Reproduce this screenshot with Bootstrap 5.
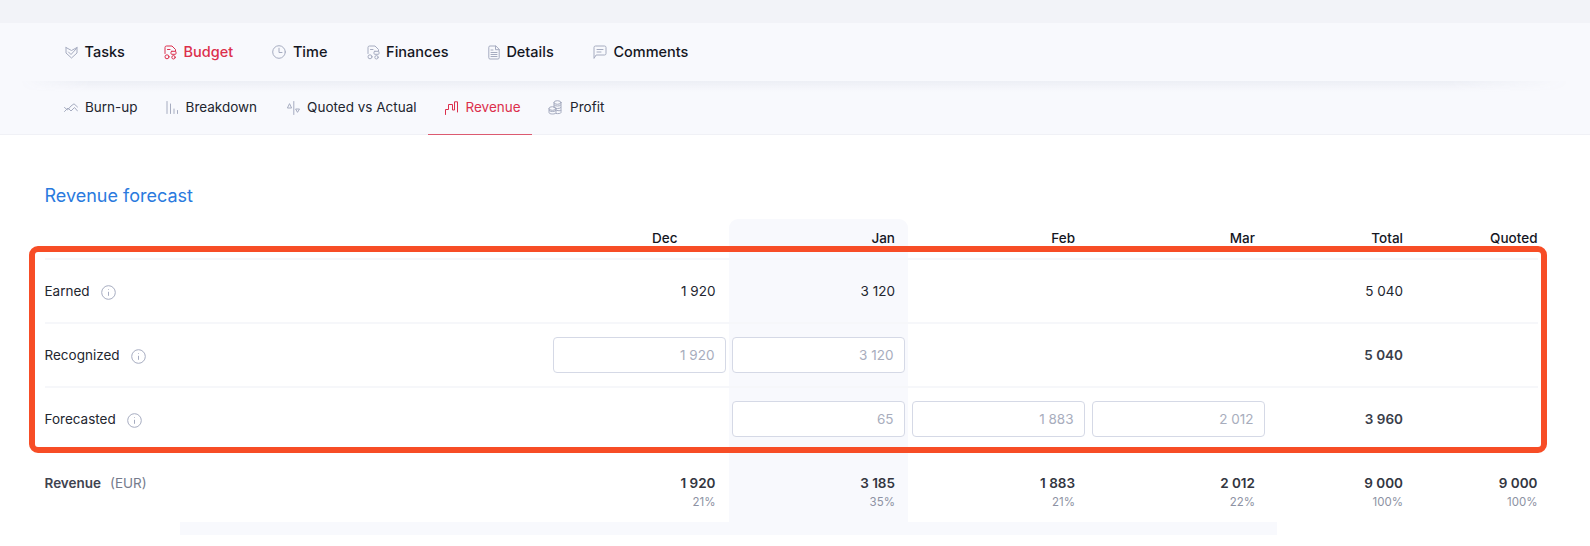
<!DOCTYPE html>
<html lang="en">
<head>
<meta charset="utf-8">
<title>Revenue forecast</title>
<link href="https://cdn.jsdelivr.net/npm/bootstrap@5.3.0/dist/css/bootstrap.min.css" rel="stylesheet">
<style>
html,body{height:546px;overflow:hidden;background:#fff}
body{font-family:Inter,"Liberation Sans",sans-serif;color:#1c1f2a;position:relative}
.strip-top{height:23px;background:#f2f3f8}
.tabs-main{height:58px;background:#f8f9fd;padding-left:65px;gap:39.2px;position:relative;z-index:1}
.tabs-main::after{content:"";position:absolute;left:20px;right:20px;top:100%;height:11px;background:linear-gradient(to bottom,rgba(90,100,140,.065),rgba(90,100,140,0));-webkit-mask-image:linear-gradient(to right,transparent,#000 70px,#000 calc(100% - 120px),transparent);mask-image:linear-gradient(to right,transparent,#000 70px,#000 calc(100% - 120px),transparent)}
.tabs-main .nav-link{padding:0;font-size:14.5px;font-weight:450;color:#14161f;display:flex;align-items:center;gap:6.5px}
.tabs-sub{height:54px;background:#f8f9fd;padding-left:48px;border-bottom:1px solid #f0f1f6}
.tabs-sub .nav-link{height:54px;padding:0 13px 0 16px;font-size:13.5px;font-weight:400;color:#22252f;display:flex;align-items:center;gap:7px;border-bottom:1px solid transparent}
.tabs-sub .nav-item:nth-child(1) .nav-link{padding-right:12px}
.tabs-sub .nav-item:nth-child(2) .nav-link{padding-right:14px}
.tabs-sub .nav-item:nth-child(4) .nav-link{padding-right:11.5px;padding-left:17px}
.tabs-sub .nav-item:nth-child(3) .nav-link{padding-right:12px}
.tabs-main .nav-link.is-on,.tabs-sub .nav-link.is-on{color:#dc2f4c}
.tabs-sub .nav-link.is-on{border-bottom-color:#dc5a70}
.nav-ico{fill:none;stroke:#a6acc0;stroke-width:1;stroke-linecap:round;stroke-linejoin:round;flex:none}
.is-on .nav-ico{stroke:#dc2f4c}
.page-body{padding:0 0 0 44.5px}
.form-title{font-size:18px;font-weight:400;color:#2a7ade;margin:0;padding-top:50px;line-height:22px;height:84px}
.fc-table{table-layout:fixed;width:1493px;margin:0;border-collapse:separate;border-spacing:0;font-size:13.5px;--bs-table-bg:transparent}
.fc-table th,.fc-table td{padding:0 13px 0 0;text-align:right;vertical-align:middle;border:0;box-shadow:none;color:#23262f}
.fc-table thead th{height:39px;font-weight:500;color:#14161f;padding-bottom:1px}
.fc-table th.dec-h{padding-right:51px}
.fc-table th.lab,.fc-table td.lab{text-align:left;padding:0;font-weight:400}
.fc-table tbody.inp td{height:64px;border-top:2px solid #f6f7fa;padding-bottom:.5px}
.fc-table td.qt,.fc-table th.qt{padding-right:0}
.fc-table td.tot,.fc-table th.tot{padding-right:0}
.fc-table .hilite{background:#f8f9fd}
.fc-table thead .hilite{border-radius:9px 9px 0 0}
.fc-table tbody.inp td.cell-in{padding:0 3.5px}
.fc-table tbody.inp td.cell-first{padding:0 3px 0 4.5px}
.num-in{height:36px;border:1px solid #d5d9e6;border-radius:4px;background:#fff;color:#a8adbd;font-size:13.5px;text-align:right;padding:0 10px;box-shadow:none;width:100%}
.num-in::placeholder{color:#a8adbd;opacity:1}
.fc-table td.strong-n{font-weight:600;color:#3a3e4a}
.fc-table tbody.sum td{height:72px;padding-top:24px;vertical-align:top;line-height:19px;font-weight:600;color:#333641}
.fc-table tbody.sum td .pct{display:block;font-size:11.5px;font-weight:400;color:#8d92a3;line-height:18px}
.fc-table tbody.sum td.lab{font-weight:600;color:#3f4350}
.cur{font-weight:400;color:#767b8c;margin-left:9px}
.info-i{margin-left:11px;vertical-align:-4px;fill:none;stroke:#a6acc0;stroke-width:1}
.foot-band{height:13px;width:1097px;margin-left:135.5px;background:#f8f9fd}
.call-out{position:absolute;left:29px;top:246px;width:1518px;height:207px;border:6px solid #f74d26;border-radius:9px;pointer-events:none}
</style>
</head>
<body>
<div class="strip-top"></div>

<ul class="nav tabs-main align-items-center flex-nowrap">
  <li class="nav-item"><a class="nav-link" href="#">
    <svg class="nav-ico" width="13" height="13" viewBox="0 0 13 13"><path d="M1 1.500 6.500 4.500 12 1.500M1 1.500V7L6.500 12 12 7V1.500"/><path d="M3.500 6 6 8.500 11.500 2.500"/></svg>Tasks</a></li>
  <li class="nav-item"><a class="nav-link is-on" href="#">
    <svg class="nav-ico" width="13" height="15" viewBox="0 0 13 15"><path d="M1 8.500V2.500A1.500 1.500 0 0 1 2.500 1H8L11.500 4.500V6"/><circle cx="3" cy="11.800" r="2"/><rect x="7" y="6.300" width="5" height="3" rx=".8"/><circle cx="9.500" cy="12.300" r="1.700"/><path d="M3.500 4.500H6"/></svg>Budget</a></li>
  <li class="nav-item"><a class="nav-link" href="#">
    <svg class="nav-ico" width="14" height="14" viewBox="0 0 14 14"><circle cx="7" cy="7" r="6.300"/><path d="M7 3.200V7.500H10"/></svg>Time</a></li>
  <li class="nav-item"><a class="nav-link" href="#">
    <svg class="nav-ico" width="13" height="15" viewBox="0 0 13 15"><path d="M1 8.500V2.500A1.500 1.500 0 0 1 2.500 1H8L11.500 4.500V6"/><circle cx="3" cy="11.800" r="2"/><rect x="7" y="6.300" width="5" height="3" rx=".8"/><circle cx="9.500" cy="12.300" r="1.700"/><path d="M3.500 4.500H6"/></svg>Finances</a></li>
  <li class="nav-item"><a class="nav-link" href="#">
    <svg class="nav-ico" width="12" height="15" viewBox="0 0 12 15"><path d="M7.500 1H2A1.200 1.200 0 0 0 .8 2.200V12.800A1.200 1.200 0 0 0 2 14H10A1.200 1.200 0 0 0 11.200 12.800V4.700Z"/><path d="M7.500 1V4.700H11.200M3 7.500H9M3 9.500H9M3 11.500H9M3 5H5"/></svg>Details</a></li>
  <li class="nav-item"><a class="nav-link" href="#">
    <svg class="nav-ico" width="14" height="14" viewBox="0 0 14 14"><path d="M1 13V2.500A1.500 1.500 0 0 1 2.500 1H11.500A1.500 1.500 0 0 1 13 2.500V8.500A1.500 1.500 0 0 1 11.500 10H3.500Z"/><path d="M4 4.500H10M4 7H8"/></svg>Comments</a></li>
</ul>

<ul class="nav tabs-sub flex-nowrap">
  <li class="nav-item"><a class="nav-link" href="#">
    <svg class="nav-ico" width="14" height="10" viewBox="0 0 14 10"><path d="M.5 4.500 3.500 7 7 3 10 .8 13.500 4"/><path d="M.5 8.500 4 5 7 8 10.500 4.500 13.500 8"/></svg>Burn-up</a></li>
  <li class="nav-item"><a class="nav-link" href="#">
    <svg class="nav-ico" width="13" height="13" viewBox="0 0 13 13"><path d="M1 .5V12.500M4.500 3V12.500M8 8V12.500M11.500 9.500V12.500"/></svg>Breakdown</a></li>
  <li class="nav-item"><a class="nav-link" href="#">
    <svg class="nav-ico" width="13" height="14" viewBox="0 0 13 14"><path d="M6.800 .5V13.500"/><path d="M2.700 3 4.600 7H.8Z"/><path d="M9 8H12.500L10.700 11Z"/></svg>Quoted vs Actual</a></li>
  <li class="nav-item"><a class="nav-link is-on" href="#">
    <svg class="nav-ico" width="13" height="14" viewBox="0 0 13 14"><path d="M.5 13.500V8.500H3.500V3.500H7.500V9H9.500V.8H12.500V11"/></svg>Revenue</a></li>
  <li class="nav-item"><a class="nav-link" href="#">
    <svg class="nav-ico" width="15" height="15" viewBox="0 0 15 15"><ellipse cx="9.500" cy="2.500" rx="3.500" ry="1.800"/><path d="M6 2.500V7.500M13 2.500V10M6 5C6.500 6.500 12.500 6.500 13 5M6 7.500C6.500 9 12.500 9 13 7.500"/><ellipse cx="4.500" cy="8.500" rx="3.500" ry="1.800"/><path d="M1 8.500V12.500C1 14.500 8 14.500 8 12.500V8.500M1 10.500C1.500 12 7.500 12 8 10.500M8 10C9 11 13 11 13 10V12.500C13 13.500 10 13.900 8 13.500"/></svg>Profit</a></li>
</ul>

<div class="page-body">
  <h2 class="form-title">Revenue forecast</h2>
  <table class="table fc-table">
    <colgroup><col style="width:504px"><col style="width:180px"><col style="width:179.500px"><col style="width:180px"><col style="width:180px"><col style="width:135px"><col style="width:134.500px"></colgroup>
    <thead>
      <tr><th class="lab"></th><th class="dec-h">Dec</th><th class="hilite">Jan</th><th>Feb</th><th>Mar</th><th class="tot">Total</th><th class="qt">Quoted</th></tr>
    </thead>
    <tbody class="inp">
      <tr><td class="lab">Earned<svg class="info-i" width="15" height="15" viewBox="0 0 15 15"><circle cx="7.500" cy="7.500" r="6.800"/><path d="M7.500 6.800V10.800M7.500 4.300V5"/></svg></td><td>1 920</td><td class="hilite">3 120</td><td></td><td></td><td class="tot">5 040</td><td class="qt"></td></tr>
      <tr><td class="lab">Recognized<svg class="info-i" width="15" height="15" viewBox="0 0 15 15"><circle cx="7.500" cy="7.500" r="6.800"/><path d="M7.500 6.800V10.800M7.500 4.300V5"/></svg></td><td class="cell-in cell-first"><input class="form-control num-in" placeholder="1 920" aria-label="Recognized Dec"></td><td class="hilite cell-in"><input class="form-control num-in" placeholder="3 120" aria-label="Recognized Jan"></td><td></td><td></td><td class="tot strong-n">5 040</td><td class="qt"></td></tr>
      <tr><td class="lab">Forecasted<svg class="info-i" width="15" height="15" viewBox="0 0 15 15"><circle cx="7.500" cy="7.500" r="6.800"/><path d="M7.500 6.800V10.800M7.500 4.300V5"/></svg></td><td></td><td class="hilite cell-in"><input class="form-control num-in" placeholder="65" aria-label="Forecasted Jan"></td><td class="cell-in"><input class="form-control num-in" placeholder="1 883" aria-label="Forecasted Feb"></td><td class="cell-in"><input class="form-control num-in" placeholder="2 012" aria-label="Forecasted Mar"></td><td class="tot strong-n">3 960</td><td class="qt"></td></tr>
    </tbody>
    <tbody class="sum">
      <tr><td class="lab">Revenue<span class="cur">(EUR)</span></td><td>1 920<span class="pct">21%</span></td><td class="hilite">3 185<span class="pct">35%</span></td><td>1 883<span class="pct">21%</span></td><td>2 012<span class="pct">22%</span></td><td class="tot">9 000<span class="pct">100%</span></td><td class="qt">9 000<span class="pct">100%</span></td></tr>
    </tbody>
  </table>
  <div class="foot-band"></div>
</div>

<div class="call-out"></div>
<script src="https://cdn.jsdelivr.net/npm/bootstrap@5.3.0/dist/js/bootstrap.bundle.min.js"></script>
</body>
</html>
